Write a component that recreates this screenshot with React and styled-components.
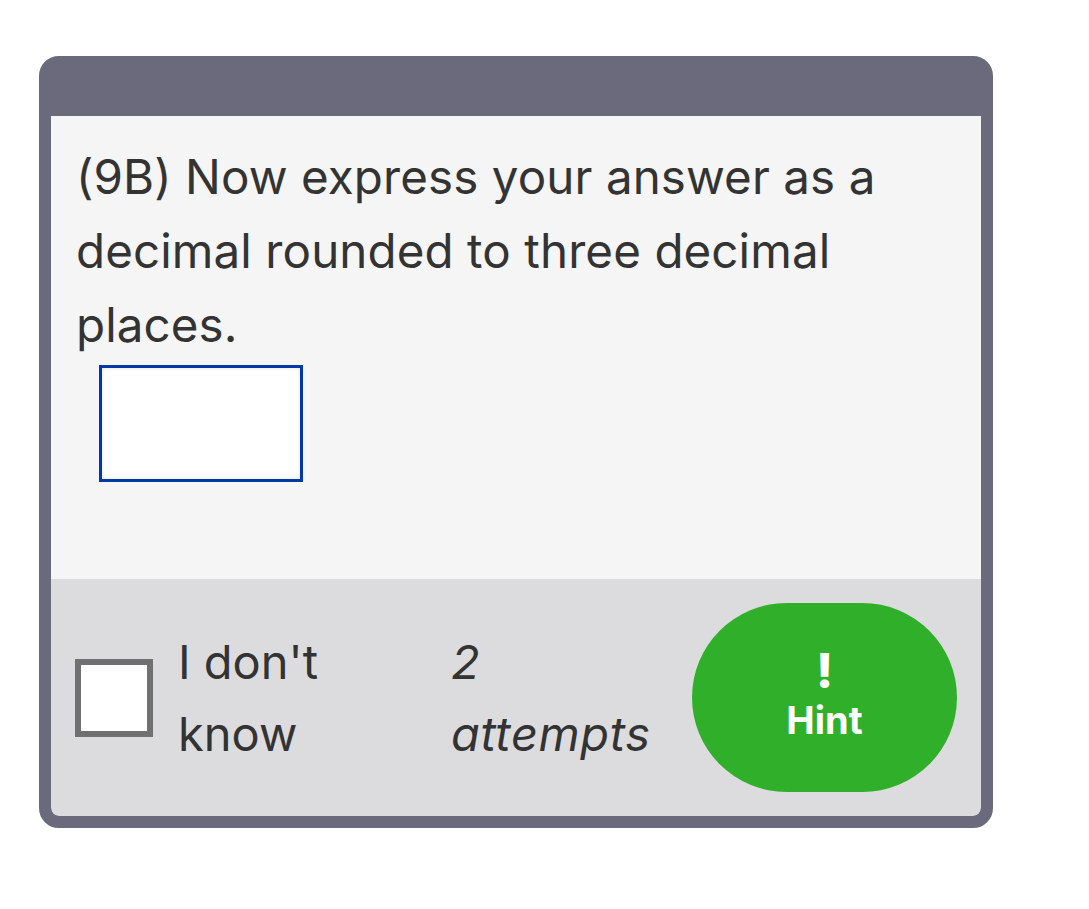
import styled, { createGlobalStyle } from 'styled-components';

const Global = createGlobalStyle`
    body {
        margin: 0;
        background: #ffffff;
        font-family: Inter, "Noto Sans", "Liberation Sans", sans-serif;
        color: #333333;
    }
`

function App(){
    return(
        <Page>
            <Global />
            <Card>
                <Header />
                <Body>
                    <Question>(9B) Now express your answer as a decimal rounded to three decimal places.</Question>
                    <Answer type="text" aria-label="answer" />
                </Body>
                <Footer>
                    <CheckLabel>
                        <Box type="checkbox" />
                        <LabelText>I don't know</LabelText>
                    </CheckLabel>
                    <Attempts>2 attempts</Attempts>
                    <HintButton type="button">
                        <Bang>!</Bang>
                        <HintText>Hint</HintText>
                    </HintButton>
                </Footer>
            </Card>
        </Page>
    )
}

const Page = styled.div`
    padding: 56px 0 0 39px;
`

const Card = styled.div`
    width: 954px;
    height: 772px;
    box-sizing: border-box;
    border: 12px solid #6b6a7c;
    border-radius: 20px;
    background: #6b6a7c;
    display: flex;
    flex-direction: column;
    overflow: hidden;
`

const Header = styled.div`
    height: 48px;
    flex: none;
    background: #6b6a7c;
`

const Body = styled.div`
    flex: 1;
    background: #f5f5f5;
    padding: 24px 25px 0 25px;
`

const Question = styled.p`
    margin: 0;
    font-size: 47.5px;
    line-height: 74px;
    letter-spacing: 0.1px;
`

const Answer = styled.input`
    display: block;
    margin: 3px 0 0 23px;
    width: 204px;
    height: 117px;
    box-sizing: border-box;
    border: 3px solid #0039a6;
    background: #ffffff;
    box-shadow: inset 0 0 4px rgba(0, 0, 0, 0.12);
    outline: none;
`

const Footer = styled.div`
    flex: none;
    height: 237px;
    background: #dcdcde;
    border-radius: 0 0 8px 8px;
    display: flex;
    align-items: center;
    padding: 0 24px;
`

const CheckLabel = styled.label`
    display: flex;
    align-items: center;
    gap: 25px;
`

const Box = styled.input`
    appearance: none;
    margin: 0;
    width: 78px;
    height: 78px;
    box-sizing: border-box;
    border: 6px solid #707070;
    background: #ffffff;
`

const LabelText = styled.span`
    width: 200px;
    font-size: 47px;
    line-height: 72px;
`

const Attempts = styled.span`
    margin-left: auto;
    margin-right: 38px;
    width: 203px;
    font-size: 47px;
    line-height: 72px;
    font-style: italic;
    letter-spacing: 0.6px;
`

const HintButton = styled.button`
    width: 265px;
    height: 189px;
    border: none;
    border-radius: 95px;
    background: #30b02a;
    color: #ffffff;
    font-family: Inter, "Noto Sans", sans-serif;
    font-weight: 700;
    display: flex;
    flex-direction: column;
    align-items: center;
    justify-content: center;
    gap: 9px;
    padding: 0 0 4px 0;
`

const Bang = styled.span`
    font-size: 48px;
    line-height: 40px;
    font-weight: 800;
`

const HintText = styled.span`
    font-size: 38px;
    line-height: 40px;
`

export default App;
